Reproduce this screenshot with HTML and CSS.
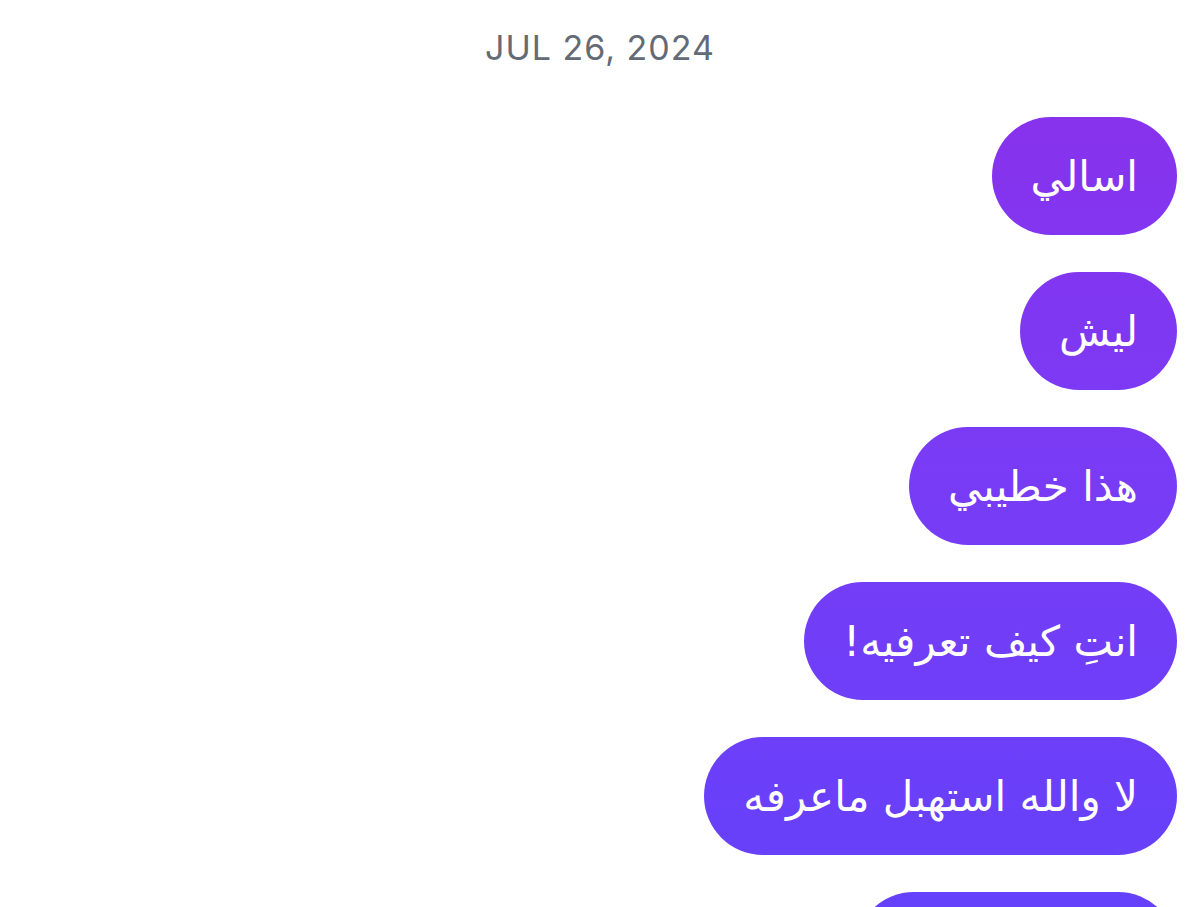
FILE: index.html
```html
<!DOCTYPE html>
<html lang="ar">
<head>
  <meta charset="UTF-8" />
  <meta name="viewport" content="width=device-width, initial-scale=1.0"/>
  <title>Messages</title>
  <link rel="stylesheet" href="styles.css">
</head>
<body>

  <div class="thread">
    <div class="date">JUL 26, 2024</div>

    <div class="messages">
      <div class="bubble" dir="rtl">اسالي</div>
      <div class="bubble" dir="rtl">ليش</div>
      <div class="bubble" dir="rtl">هذا خطيبي</div>
      <div class="bubble" dir="rtl">انتِ كيف تعرفيه!</div>
      <div class="bubble" dir="rtl">لا والله استهبل ماعرفه</div>
      <div class="bubble bubble-next"></div>
    </div>
  </div>

</body>
</html>
```

FILE: styles.css
```css
body {
  margin: 0;
  background: #ffffff;
  font-family: 'DejaVu Sans', 'Noto Sans', sans-serif;
  height: 907px;
  overflow: hidden;
}

.thread {
  padding-top: 28px;
}

.date {
  text-align: center;
  font-family: Inter, 'Liberation Sans', sans-serif;
  font-size: 34px;
  letter-spacing: 1px;
  color: #646a76;
  line-height: 40px;
}

.messages {
  display: flex;
  flex-direction: column;
  align-items: flex-end;
  gap: 37px;
  padding: 49px 23px 0 0;
}

.bubble {
  height: 118px;
  box-sizing: border-box;
  padding: 0 39px;
  border-radius: 59px;
  display: flex;
  align-items: center;
  font-size: 42px;
  color: #ffffff;
  background: linear-gradient(180deg, #8c2fe9 0px, #7a3bf5 450px, #6541fb 907px);
  background-attachment: fixed;
  white-space: nowrap;
}

.bubble-next {
  width: 322px;
}
```
